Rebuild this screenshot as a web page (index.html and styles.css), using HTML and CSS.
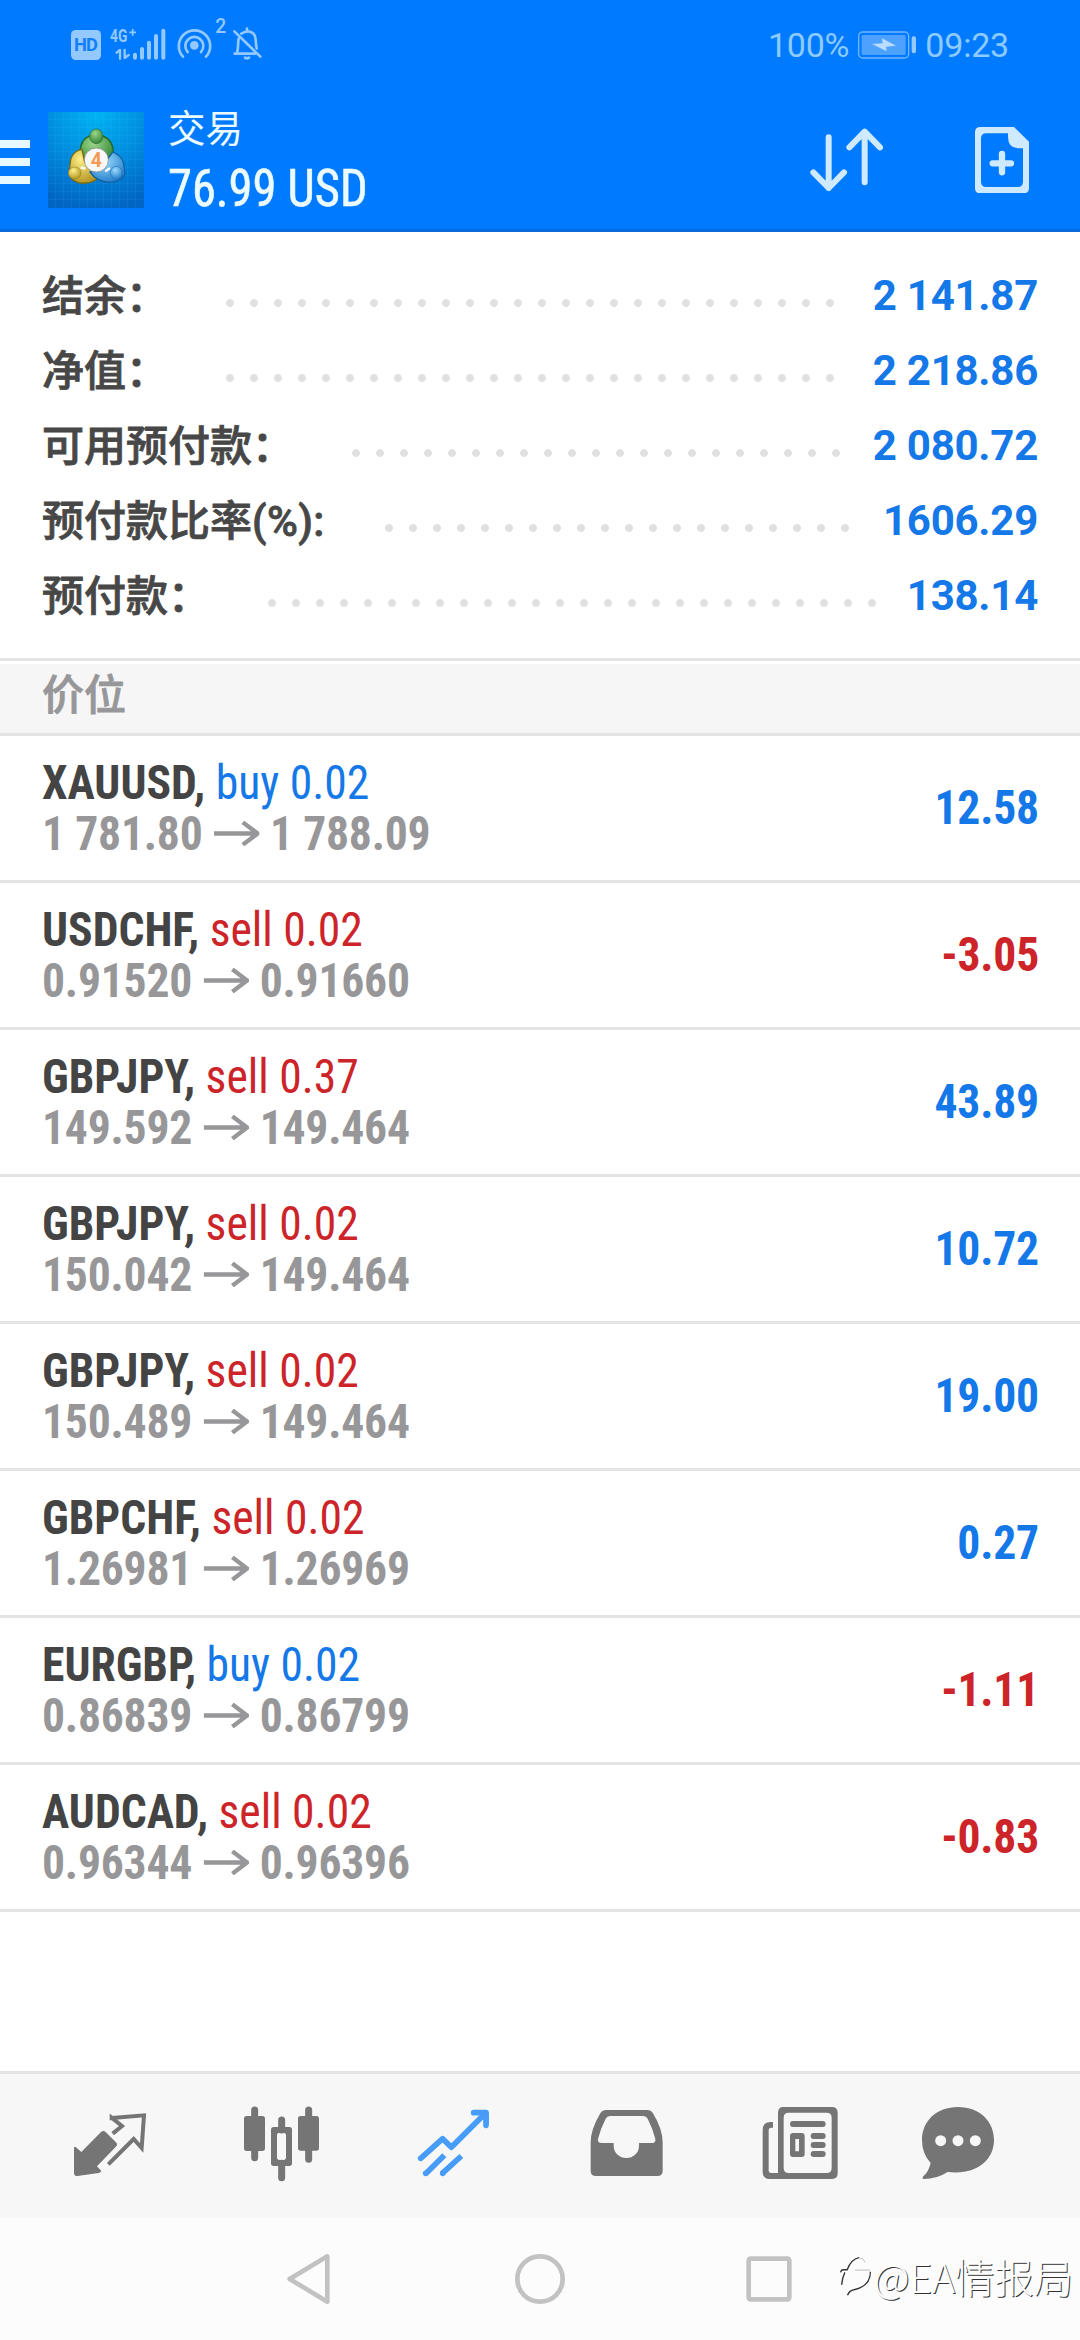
FILE: index.html
```html
<!DOCTYPE html>
<html lang="zh-CN">
<head>
<meta charset="utf-8">
<title>交易</title>
<link rel="stylesheet" href="styles.css">
</head>
<body>
<div class="screen">
  <header class="top">
    <div class="status">
      <svg class="status-icons" viewBox="0 0 840 264">
        <rect x="213" y="90" width="90" height="90" rx="14" fill="#93c9ff"/>
        <text class="hd" x="258" y="154" text-anchor="middle" textLength="72">HD</text>
        <text class="net" x="330" y="126" textLength="52" lengthAdjust="spacingAndGlyphs">4G</text>
        <g fill="none" stroke="#93c9ff" stroke-linecap="round">
          <path d="M388 97h20M398 87v20" stroke-width="5" stroke-linecap="butt"/>
          <path d="M350 158l10-8v26M374 150v24l12-9" stroke-width="7" stroke-linejoin="round"/>
          <path d="M405 164v9M426 147v26M447 128v45M468 108v65M490 92v81" stroke-width="12"/>
          <path d="M549 170a47 47 0 1 1 69 0M563 156a27 27 0 1 1 40 0" stroke-width="8"/>
          <path d="M703 94l78 76M704 161h62M711 158c5-14 2-30 5-42M724 101c24-14 42-3 43 17 1 10 1 18 3 27" stroke-width="8"/>
          <path d="M741 86v8M735 173q6 4 12 0" stroke-width="8"/>
        </g>
        <circle cx="583" cy="136" r="13" fill="#93c9ff"/>
        <text class="sup" x="646" y="99">2</text>
      </svg>
      <div class="status-right">
        <span>100%</span>
        <svg class="battery" viewBox="0 0 174 84">
          <rect x="2" y="3" width="150" height="78" rx="12" fill="none" stroke="#6fb6ff" stroke-width="4"/>
          <rect x="11" y="12" width="132" height="60" rx="4" fill="#4ea2ff"/>
          <rect x="161" y="16" width="13" height="51" rx="6" fill="#93c9ff"/>
          <path d="M42 39l32-2-2-15 42 22-30 3 2 14z" fill="#b9dcff"/>
        </svg>
        <span>09:23</span>
      </div>
    </div>
    <div class="appbar">
      <svg class="menu" viewBox="0 0 90 132"><path d="M0 0h90v24H0zM0 54h90v24H0zM0 108h90v24H0z" fill="#e6f9ff"/></svg>
      <svg class="logo" viewBox="0 0 288 288">
        <defs>
          <radialGradient id="sky" cx=".5" cy="0" r="1"><stop offset="0" stop-color="#00b4f2"/><stop offset=".5" stop-color="#008ee0"/><stop offset="1" stop-color="#0065c4"/></radialGradient>
          <radialGradient id="green" cx=".4" cy=".3" r=".8"><stop offset="0" stop-color="#9bd689"/><stop offset="1" stop-color="#257b2c"/></radialGradient>
          <radialGradient id="gold" cx=".4" cy=".3" r=".8"><stop offset="0" stop-color="#fff08a"/><stop offset="1" stop-color="#ab8b15"/></radialGradient>
          <radialGradient id="blue" cx=".4" cy=".3" r=".8"><stop offset="0" stop-color="#9bdcff"/><stop offset="1" stop-color="#1875c5"/></radialGradient>
        </defs>
        <rect width="288" height="288" fill="url(#sky)"/>
        <path d="M22 0v288M46 0v288M70 0v288M94 0v288M118 0v288M142 0v288M166 0v288M190 0v288M214 0v288M238 0v288M262 0v288M0 22h288M0 46h288M0 70h288M0 94h288M0 118h288M0 142h288M0 166h288M0 190h288M0 214h288M0 238h288M0 262h288" stroke="#4cc3ff" stroke-opacity=".2" stroke-width="2"/>
        <path d="M96 120Q98 78 130 70Q146 64 164 72Q198 84 196 130L188 158L106 146Z" fill="url(#green)" stroke="#20682c" stroke-width="4"/>
        <path d="M102 112Q76 116 68 142L63 184Q66 204 92 212Q120 218 144 204L150 172L110 150Z" fill="url(#gold)" stroke="#776a12" stroke-width="4"/>
        <path d="M194 120Q220 130 227 154L231 186Q220 208 190 211Q148 212 126 180L160 168Z" fill="url(#blue)" stroke="#1261a5" stroke-width="4"/>
        <path d="M98 166l14 4M186 168l-14 10" stroke="#fff" stroke-width="7"/>
        <ellipse cx="145" cy="73" rx="20" ry="22" fill="url(#green)" stroke="#286b31" stroke-width="2"/>
        <ellipse cx="80" cy="183" rx="19" ry="18" fill="url(#gold)" stroke="#9a851d" stroke-width="2"/>
        <ellipse cx="205" cy="182" rx="18" ry="19" fill="url(#blue)" stroke="#2471b6" stroke-width="2"/>
        <circle cx="145" cy="144" r="36" fill="#f7f8f7" stroke="#7b827c" stroke-width="2"/>
        <text class="four" x="145" y="164" text-anchor="middle">4</text>
      </svg>
      <div class="title">
        <div class="title-name">交易</div>
        <div class="title-sum cond">76.99 USD</div>
      </div>
      <svg class="sort" viewBox="325 380 228 200">
        <path d="M384 411v152M338 516l46 47 46-47M492 546V394M446 441l46-47 46 47" fill="none" stroke="#cfe9ff" stroke-width="18" stroke-linecap="round" stroke-linejoin="round"/>
      </svg>
      <svg class="new" viewBox="822 380 168 200">
        <path fill-rule="evenodd" d="M841 380H942L987 424V563Q987 579 971 579H841Q825 579 825 563V396Q825 380 841 380ZM859 399Q843 399 843 415V544Q843 560 859 560H953Q969 560 969 544V444H956Q924 444 924 410V399Z" fill="#cfe9ff"/>
        <path d="M906 461v55M878 489h55" stroke="#cfe9ff" stroke-width="19" stroke-linecap="round"/>
      </svg>
    </div>
  </header>

  <section class="account">
    <div class="acc"><span class="acc-label">结余：</span><i class="dots"></i><b class="acc-value">2 141.87</b></div>
    <div class="acc"><span class="acc-label">净值：</span><i class="dots"></i><b class="acc-value">2 218.86</b></div>
    <div class="acc"><span class="acc-label">可用预付款：</span><i class="dots"></i><b class="acc-value">2 080.72</b></div>
    <div class="acc"><span class="acc-label">预付款比率<span class="latin">(%):</span></span><i class="dots"></i><b class="acc-value">1606.29</b></div>
    <div class="acc"><span class="acc-label">预付款：</span><i class="dots"></i><b class="acc-value">138.14</b></div>
  </section>

  <h2 class="section">价位</h2>

  <svg class="defs"><symbol id="arrow" viewBox="0 0 136 74" preserveAspectRatio="none"><path d="M0 37h130M86 4l44 33-44 33" fill="none" stroke="#979799" stroke-width="13"/></symbol></svg>
  <main class="list">
    <div class="pos"><div class="cond"><div class="pos-head"><b>XAUUSD,</b> <span class="buy">buy 0.02</span></div><div class="pos-price">1 781.80<svg class="arrow"><use href="#arrow"/></svg>1 788.09</div></div><div class="profit cond buy">12.58</div></div>
    <div class="pos"><div class="cond"><div class="pos-head"><b>USDCHF,</b> <span class="sell">sell 0.02</span></div><div class="pos-price">0.91520<svg class="arrow"><use href="#arrow"/></svg>0.91660</div></div><div class="profit cond sell">-3.05</div></div>
    <div class="pos"><div class="cond"><div class="pos-head"><b>GBPJPY,</b> <span class="sell">sell 0.37</span></div><div class="pos-price">149.592<svg class="arrow"><use href="#arrow"/></svg>149.464</div></div><div class="profit cond buy">43.89</div></div>
    <div class="pos"><div class="cond"><div class="pos-head"><b>GBPJPY,</b> <span class="sell">sell 0.02</span></div><div class="pos-price">150.042<svg class="arrow"><use href="#arrow"/></svg>149.464</div></div><div class="profit cond buy">10.72</div></div>
    <div class="pos"><div class="cond"><div class="pos-head"><b>GBPJPY,</b> <span class="sell">sell 0.02</span></div><div class="pos-price">150.489<svg class="arrow"><use href="#arrow"/></svg>149.464</div></div><div class="profit cond buy">19.00</div></div>
    <div class="pos"><div class="cond"><div class="pos-head"><b>GBPCHF,</b> <span class="sell">sell 0.02</span></div><div class="pos-price">1.26981<svg class="arrow"><use href="#arrow"/></svg>1.26969</div></div><div class="profit cond buy">0.27</div></div>
    <div class="pos"><div class="cond"><div class="pos-head"><b>EURGBP,</b> <span class="buy">buy 0.02</span></div><div class="pos-price">0.86839<svg class="arrow"><use href="#arrow"/></svg>0.86799</div></div><div class="profit cond sell">-1.11</div></div>
    <div class="pos"><div class="cond"><div class="pos-head"><b>AUDCAD,</b> <span class="sell">sell 0.02</span></div><div class="pos-price">0.96344<svg class="arrow"><use href="#arrow"/></svg>0.96396</div></div><div class="profit cond sell">-0.83</div></div>
  </main>

  <nav class="tabs">
    <svg viewBox="72 42 516 432">
      <path d="M222 262Q224 258 228 262L244 276L303 216Q310 210 317 216L350 249Q353 254 349 259L291 319L304 333Q302 338 296 339L232 348Q222 349 222 339Z"/>
      <path fill="none" stroke="#757575" stroke-width="12" d="M338 221L366 198L335 173V174L432 166L425 264L401 237L325 313"/>
    </svg>
    <svg viewBox="588 42 516 432">
      <path d="M764 150v143M845 180v30M845 310v43M926 150v148" stroke="#757575" stroke-width="21" stroke-linecap="round"/>
      <rect x="732" y="168" width="63" height="105" rx="8"/><rect x="894" y="168" width="63" height="104" rx="8"/>
      <path fill-rule="evenodd" d="M821 201h47q8 0 8 8v101q0 8-8 8h-47q-8 0-8-8V209q0-8 8-8zM839 218q-8 0-8 8v66q0 8 8 8h11q8 0 8-8v-66q0-8-8-8z"/>
    </svg>
    <svg viewBox="24 42 516 432">
      <g fill="none" stroke="#479cf8" stroke-width="17" stroke-linecap="round" stroke-linejoin="round">
        <path d="M182 295L248 236L274 262L376 160"/><path d="M341 158H378V196"/>
        <path stroke-linecap="butt" d="M197 341L253 286M246 341L304 288"/><path d="M197 340h.1M248 340h.1"/>
      </g>
      <path d="M352 158H387V195Z" fill="#479cf8"/>
    </svg>
    <svg viewBox="540 42 516 432">
      <path fill-rule="evenodd" d="M738 150H862Q872 150 879 160Q908 208 908 248V332Q908 348 892 348H708Q692 348 692 332V248Q692 208 721 160Q728 150 738 150ZM750 168Q741 168 737 176Q721 207 714 237Q713 249 724 249H761V258A38 36 0 0 0 837 258V249H876Q888 249 886 237Q879 207 863 176Q859 168 850 168Z"/>
    </svg>
    <svg viewBox="-24 42 516 432">
      <path fill-rule="evenodd" d="M190 141H336Q353 141 353 158V340Q353 357 336 357H150Q128 357 128 335V210Q128 186 152 186H159V203H154Q146 203 146 211V331Q146 339 154 339H174V158Q174 141 190 141ZM206 158Q191 158 191 173V324Q191 339 206 339H320Q335 339 335 324V173Q335 158 320 158Z"/>
      <path d="M219 192H308M281 228H308M281 255H308M281 282H308" stroke="#757575" stroke-width="18" stroke-linecap="round"/>
      <path fill-rule="evenodd" d="M219 219H245Q254 219 254 228V282Q254 291 245 291H219Q210 291 210 282V228Q210 219 219 219ZM226 237V274H237V237Z"/>
    </svg>
    <svg viewBox="492 42 516 432">
      <path d="M714 141C780 141 822 185 822 240C822 300 770 346 683 336Q650 357 612 357Q604 357 610 349Q626 335 632 309Q606 281 606 240C606 185 648 141 714 141Z"/>
      <g fill="#f7f7f7"><circle cx="662" cy="242" r="16.500"/><circle cx="714" cy="242" r="16.500"/><circle cx="766" cy="242" r="16.500"/></g>
    </svg>
  </nav>

  <footer class="sysnav">
    <svg class="sysnav-icons" viewBox="0 474 3240 366">
      <g fill="none" stroke="#c2c2c2" stroke-width="14" stroke-linejoin="round">
        <path d="M982 589V725L869 657Z"/>
        <circle cx="1620" cy="657" r="68"/>
        <rect x="2246" y="596" width="122" height="122" rx="6"/>
      </g>
    </svg>
    <div class="watermark">
      <svg viewBox="350 600 110 135">
        <g fill="none"><path d="M358 658q2-8 8-8h12q12-32 36-37M449 656q0 44-50 55q-14 2-20 17M361 696q2-22 10-38" stroke="#333" stroke-width="4"/><path d="M414 613q14 2 19 14M402 651h46" stroke="#999" stroke-width="2"/></g>
      </svg>
      <span>@EA情报局</span>
    </div>
  </footer>
</div>
</body>
</html>
```
FILE: styles.css
```css
body {
  margin: 0;
  background: #fff;
  font-family: Roboto, "Noto Sans CJK SC", sans-serif;
}

svg {
  display: block;
  flex: none;
}

.screen {
  display: flex;
  flex-direction: column;
  width: 1080px;
  height: 2340px;
}

.cond {
  font-family: "Roboto Condensed", Roboto, "Noto Sans CJK SC", sans-serif;
  font-stretch: 75%;
  transform: scaleX(.95);
  transform-origin: left center;
}

.top {
  box-sizing: border-box;
  height: 232px;
  background: #007bff;
  border-bottom: 3px solid #0a6cdc;
}

.status {
  display: flex;
  justify-content: space-between;
  height: 88px;
}

.status-icons {
  width: 280px;
  height: 88px;
}

.status text {
  font-family: Roboto, sans-serif;
}

.hd {
  font-size: 55px;
  font-weight: 700;
  fill: #1280fa;
}

.net {
  font-size: 54px;
  font-weight: 700;
  fill: #93c9ff;
}

.sup {
  font-size: 58px;
  font-weight: 500;
  fill: #93c9ff;
}

.status-right {
  display: flex;
  align-items: center;
  padding: 2px 71px 0 0;
  gap: 9px;
  font-size: 34px;
  letter-spacing: -.2px;
  color: #8ccaff;
}

.battery {
  width: 58px;
  height: 28px;
}

.appbar {
  display: flex;
  align-items: flex-start;
  height: 141px;
}

.menu {
  width: 30px;
  height: 44px;
  margin-top: 52px;
}

.logo {
  width: 96px;
  height: 96px;
  margin: 24px 24px 0 18px;
}

.four {
  font: 700 58px Roboto, sans-serif;
  fill: #f59a55;
}

.title {
  flex: 1;
  color: #ecfbff;
}

.title-name {
  margin-top: 14px;
  font-size: 37.500px;
  line-height: 54px;
}

.title-sum {
  font-size: 51px;
  line-height: 66px;
  -webkit-text-stroke: .6px #ecfbff;
}

.sort {
  width: 76px;
  height: 66.700px;
  margin: 38.700px 89px 0 0;
}

.new {
  width: 56px;
  height: 66.700px;
  margin: 38.700px 50px 0 0;
}

.account {
  box-sizing: border-box;
  height: 429px;
  padding: 26px 42px 0 42px;
  border-bottom: 3px solid #e4e4e4;
}

.acc {
  display: flex;
  align-items: center;
  height: 75px;
  font-size: 42px;
  line-height: 75px;
}

.acc-label {
  padding-bottom: 5px;
  color: #474747;
  font-family: "Noto Sans CJK SC", sans-serif;
  font-weight: 500;
  line-height: 70px;
  -webkit-text-stroke: .8px #474747;
}

.latin {
  padding-right: 2px;
  font-family: Roboto, sans-serif;
  letter-spacing: .4px;
  line-height: 0;
}

.dots {
  flex: 1;
  height: 8px;
  margin: 15px 27px 0 58px;
  background: radial-gradient(circle at 4px 4px, #e0e0e0 3.500px, transparent 4.300px) 0 0 / 24px 8px;
}

.acc-value {
  color: #1478e8;
  font-weight: 700;
  letter-spacing: -.25px;
}

.section {
  box-sizing: border-box;
  height: 75px;
  margin: 0;
  padding-left: 42px;
  border-top: 3px solid #fff;
  border-bottom: 3px solid #e4e4e4;
  background: #f6f6f6;
  color: #979799;
  font-family: "Noto Sans CJK SC", sans-serif;
  font-size: 42px;
  font-weight: 500;
  line-height: 55px;
  -webkit-text-stroke: .8px #979799;
}

.defs {
  position: absolute;
  width: 0;
  height: 0;
}

.list {
  flex: 1;
}

.pos {
  display: flex;
  justify-content: space-between;
  align-items: center;
  box-sizing: border-box;
  height: 147px;
  padding: 0 41px 0 42px;
  border-bottom: 3px solid #e4e4e4;
  font-size: 48px;
  line-height: 51px;
}

.pos-head {
  color: #444;
}

.pos-price {
  display: flex;
  align-items: center;
  color: #979799;
  font-weight: 700;
  letter-spacing: -.2px;
}

.arrow {
  width: 48px;
  height: 25px;
  margin: 0 11px 0 12px;
}

.buy {
  color: #1478e8;
}

.sell {
  color: #cc2429;
}

.profit {
  padding-bottom: 2px;
  font-weight: 700;
  letter-spacing: -.2px;
  transform-origin: right center;
}

.tabs {
  display: flex;
  box-sizing: border-box;
  height: 147px;
  padding-left: 24px;
  border-top: 3px solid #e4e4e4;
  background: #f7f7f7;
  fill: #757575;
}

.tabs svg {
  width: 172px;
  height: 144px;
}

.sysnav {
  position: relative;
  height: 122px;
  background: #fcfcfc;
}

.sysnav-icons {
  width: 1080px;
  height: 122px;
}

.watermark {
  position: absolute;
  top: 35px;
  right: 7px;
  display: flex;
  align-items: center;
  color: #fff;
  font-family: "Noto Sans CJK SC", sans-serif;
  font-size: 39.300px;
  font-weight: 300;
  line-height: 44px;
  text-shadow: 1px 1px 0 #333;
}

.watermark svg {
  width: 36px;
  height: 45px;
}
```
